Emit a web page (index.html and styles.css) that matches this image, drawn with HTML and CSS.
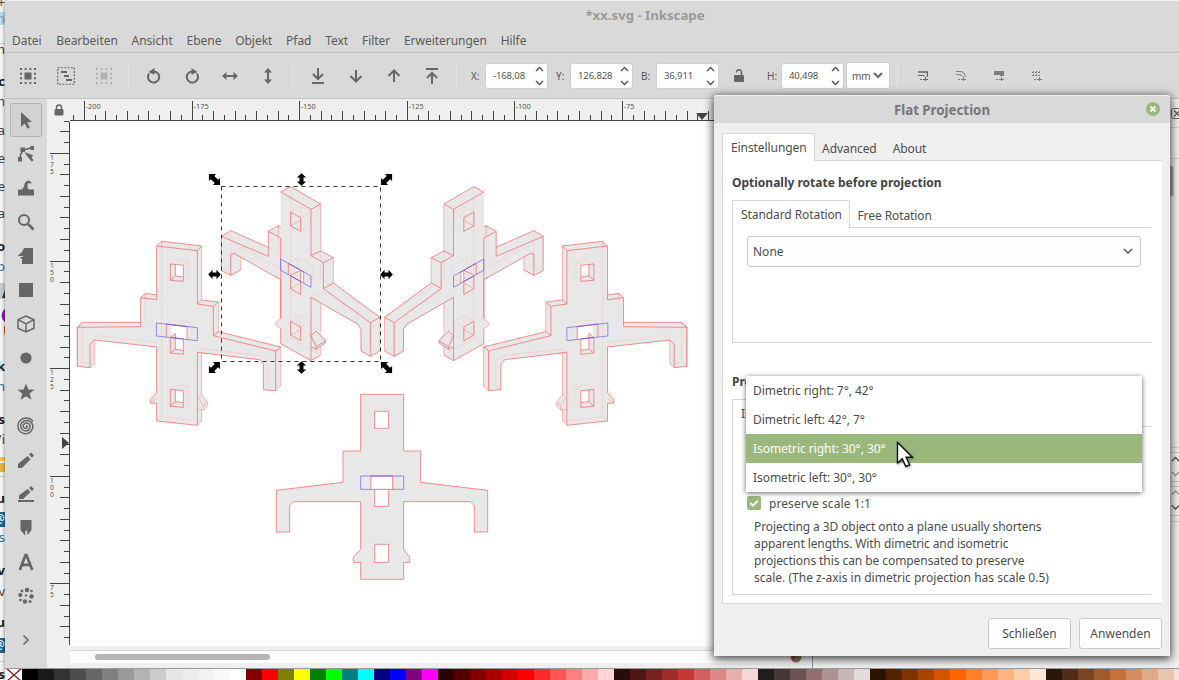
FILE: index.html
```html
<!DOCTYPE html>
<html lang="de">
<head>
<meta charset="utf-8">
<title>*xx.svg - Inkscape</title>
<link rel="stylesheet" href="styles.css">
</head>
<body>
<div class="desktop">
  <svg class="behind" width="5" height="680" viewBox="0 0 5 680">
    <rect width="5" height="680" fill="#f7f7f7"/>
    <rect y="12" width="5" height="13" fill="#b9dcf5"/>
    <rect y="283" width="5" height="16" fill="#c9ced4"/>
    <path d="M5 309a8 8 0 0 0 0 13z" fill="#8a1fa0"/><path d="M5 325v10l-1-2v-6z" fill="#b5541c"/>
    <path d="M5 290v8H2z" fill="#333"/>
    <rect y="457" width="5" height="4" fill="#f3c54b"/><rect y="463" width="5" height="9" fill="#e9b93c"/>
    <path d="M0 476.500h5M0 43.500h5M0 661.500h5" stroke="#d0d0d0"/>
    <rect y="512" width="5" height="15" fill="#1c6797"/><rect y="638" width="5" height="15" fill="#1c6797"/>
    <g class="behind-text" text-anchor="end">
      <text x="5" y="7">+</text><text x="5" y="23" class="dim">n</text><text x="5" y="54">n</text>
      <text x="5" y="86" class="b">c</text><text x="5" y="106">n</text><text x="5" y="135">a</text>
      <text x="5" y="163">e</text><text x="5" y="191">e</text><text x="5" y="218">a</text>
      <text x="5" y="251" class="b">o</text><text x="5" y="271" class="link">p</text>
      <text x="5" y="371" class="b">k</text><text x="5" y="391" class="link">n</text>
      <text x="5" y="424" class="b">s</text><text x="5" y="444">/i</text>
      <text x="5" y="503" class="b">u</text><text x="5" y="523" class="inv">@</text><text x="5" y="542" class="link">s</text>
      <text x="5" y="575" class="b">v</text><text x="5" y="596">v</text><text x="5" y="627" class="b">u</text>
      <text x="5" y="649" class="inv">@</text><text x="5" y="679" class="b">s</text>
    </g>
  </svg>

  <div class="window">
    <div class="titlebar">*xx.svg - Inkscape</div>
    <div class="menubar">
      <span>Datei</span><span>Bearbeiten</span><span>Ansicht</span><span>Ebene</span><span>Objekt</span><span>Pfad</span><span>Text</span><span>Filter</span><span>Erweiterungen</span><span>Hilfe</span>
    </div>
    <div class="toolbar">
      <div class="tb"><svg width="16" height="16" viewBox="0 0 16 16"><rect x="4.500" y="4.500" width="7" height="7"/><path d="M0 1h16M0 15h16" class="dots"/><path d="M1 0v16M15 0v16" class="dots"/></svg></div>
      <div class="tb"><svg width="18" height="18" viewBox="0 0 18 18"><rect x=".750" y=".750" width="16.500" height="16.500" class="l dash"/><path d="M4 5h6M7 9h5M9 13h6" class="l"/></svg></div>
      <div class="tb off"><svg width="16" height="16" viewBox="0 0 16 16"><rect x="4.500" y="4.500" width="7" height="7"/><path d="M0 1h16M0 15h16" class="dots"/><path d="M1 0v16M15 0v16" class="dots"/></svg></div>
      <i class="sep"></i>
      <div class="tb"><svg width="16" height="16" viewBox="0 0 16 16"><path d="M3.200 5.500A5.600 5.600 0 1 0 8 3.400" class="l"/><path d="M8.500 0v6.800L2.500 4z"/></svg></div>
      <div class="tb"><svg width="16" height="16" viewBox="0 0 16 16"><path d="M12.800 5.500A5.600 5.600 0 1 1 8 3.400" class="l"/><path d="M7.500 0v6.800l6-2.800z"/></svg></div>
      <div class="tb"><svg width="16" height="16" viewBox="0 0 16 16"><path d="M3 8h10" class="l"/><path d="M4.500 4v8L0 8zM11.500 4v8L16 8z"/></svg></div>
      <div class="tb"><svg width="16" height="16" viewBox="0 0 16 16"><path d="M8 3v10" class="l"/><path d="M4 4.500h8L8 0zM4 11.500h8L8 16z"/></svg></div>
      <i class="sep"></i>
      <div class="tb"><svg width="16" height="18" viewBox="0 0 16 18"><path d="M8 1v11M3 7l5 5 5-5M2 16h12" class="l"/></svg></div>
      <div class="tb"><svg width="16" height="16" viewBox="0 0 16 16"><path d="M8 2v11M2.500 8L8 13.500 13.500 8" class="l"/></svg></div>
      <div class="tb"><svg width="16" height="16" viewBox="0 0 16 16"><path d="M8 14V3M2.500 8L8 2.500 13.500 8" class="l"/></svg></div>
      <div class="tb"><svg width="16" height="18" viewBox="0 0 16 18"><path d="M8 17V6M3 11l5-5 5 5M2 2h12" class="l"/></svg></div>
      <i class="sep"></i>
      <label>X:</label><div class="spin"><span>-168,08</span><svg width="9" height="20" viewBox="0 0 9 20"><path d="M1 5l3.500-3.500L8 5M1 15l3.500 3.500L8 15" class="c"/></svg></div>
      <label>Y:</label><div class="spin"><span>126,828</span><svg width="9" height="20" viewBox="0 0 9 20"><path d="M1 5l3.500-3.500L8 5M1 15l3.500 3.500L8 15" class="c"/></svg></div>
      <label class="lb">B:</label><div class="spin"><span>36,911</span><svg width="9" height="20" viewBox="0 0 9 20"><path d="M1 5l3.500-3.500L8 5M1 15l3.500 3.500L8 15" class="c"/></svg></div>
      <div class="tb lock"><svg width="10" height="13" viewBox="0 0 10 13"><rect y="6" width="10" height="7" rx="1"/><path d="M2.500 3.500V3a2.500 2.300 0 0 1 5 0v4" class="l thin"/></svg></div>
      <label>H:</label><div class="spin"><span>40,498</span><svg width="9" height="20" viewBox="0 0 9 20"><path d="M1 5l3.500-3.500L8 5M1 15l3.500 3.500L8 15" class="c"/></svg></div>
      <div class="unit">mm<svg width="10" height="7" viewBox="0 0 10 7"><path d="M1 1l4 4 4-4" class="l"/></svg></div>
      <i class="sep s2"></i>
      <div class="tb"><svg width="10" height="10" viewBox="0 0 10 10"><path d="M0 1h9.500V6" class="l t15"/><path d="M0 4.500h6v1" class="l t1"/><path d="M2 8.500h2M5 8.500h5M7.500 6v4" class="l t1"/></svg></div>
      <div class="tb off2"><svg width="10" height="10" viewBox="0 0 10 10"><path d="M0 .500h4q5 0 5 5.500M0 3.500h2q4 0 4 2" class="l t1"/><path d="M2 8.500h2M5 8.500h5M7.500 6v4" class="l t1"/></svg></div>
      <div class="tb off2"><svg width="10" height="10" viewBox="0 0 10 10"><path d="M0 0h10V5H6V4H0z"/><path d="M2 8.500h2M5 8.500h5M7.500 6v4" class="l t1"/></svg></div>
      <div class="tb off2"><svg width="10" height="10" viewBox="0 0 10 10"><path d="M0 1.500h9M0 4.500h9" class="l t1 d2"/><path d="M1.500 0v6M4.500 0v6M7.500 0v3" class="l t1 d2"/><path d="M2 8.500h2M5 8.500h5M7.500 6v4" class="l t1"/></svg></div>
    </div>

    <div class="work">
      <div class="toolbox">
        <div class="tool on"><svg width="18" height="18" viewBox="0 0 18 18"><path d="M4 1l11 10-5 .300 3 5-2.500 1.500L7.700 12.500 4 16z"/></svg></div>
        <div class="tool"><svg width="18" height="18" viewBox="0 0 18 18"><path d="M3 14Q3 3 16 3" class="l thin"/><path d="M1 12h4v4.500H1zM3.500 2.500H8V7H3.500zM13.500 1H17v4h-3.500zM7.500 7l9 3.500-2 1.500 2 3.500-2 1-4-5z"/></svg></div>
        <div class="tool"><svg width="18" height="18" viewBox="0 0 18 18"><path d="M1 16.500V10.500q5 1 6-3.500 1-5.500 5-5.500l2.500 2-1 1.500q-2-2-3 .500-.500 3.500 1.500 5H17v6z"/></svg></div>
        <div class="tool"><svg width="18" height="18" viewBox="0 0 18 18"><circle cx="7" cy="7" r="5" class="l"/><path d="M11 11l5.500 5.500" class="l w3"/></svg></div>
        <div class="tool"><svg width="18" height="18" viewBox="0 0 18 18"><path d="M7 1h9v16H5v-5l-4-3.500L5 5z"/><path d="M2 9.500h4" class="hole"/></svg></div>
        <div class="tool"><svg width="18" height="18" viewBox="0 0 18 18"><rect x="2" y="2" width="14" height="14"/></svg></div>
        <div class="tool"><svg width="18" height="18" viewBox="0 0 18 18"><path d="M9 1l8 3.700v8.600L9 17l-8-3.700V4.700zM1 4.700L9 9l8-4.300M9 9v8" class="l thin"/></svg></div>
        <div class="tool"><svg width="18" height="18" viewBox="0 0 18 18"><circle cx="9" cy="9" r="5.600"/></svg></div>
        <div class="tool"><svg width="18" height="18" viewBox="0 0 18 18"><path d="M9 .500l2.300 5.900 6.200.300-4.800 3.900 1.700 6.200L9 13.300l-5.400 3.500 1.700-6.200L.500 6.700l6.200-.300z"/></svg></div>
        <div class="tool"><svg width="18" height="18" viewBox="0 0 18 18"><path d="M9 9.500C10 8 11 10 9.500 11.200 7.500 12.200 5.800 10 6.300 8.300 7 5.500 11 5.200 12.500 7.500 14 10.500 12 14 9 14 5.500 14 3.300 11 3.700 8 4.500 4.500 8 3 11 3.500 15 4.500 16.500 8 15.500 11.500 14 15.500 10.500 17.200 7 16.500 2.500 15.300.700 12 1 8 1.500 4 5 1 9 1 12 1 14.500 2 16 4.500" class="l thin"/></svg></div>
        <div class="tool"><svg width="18" height="18" viewBox="0 0 18 18"><path d="M1 17v-4L10.500 5l3 3.200L5 17zM12 3.500l2-2 3 3-2 2.200z"/></svg></div>
        <div class="tool"><svg width="18" height="18" viewBox="0 0 18 18"><path d="M2 14v-3.500L10.500 4l3 3L6 14zM12 3l2-2 3 3-2 2zM1 15h16v2H1z"/></svg></div>
        <div class="tool"><svg width="18" height="18" viewBox="0 0 18 18"><path d="M3.500 1h11v10l-4 5-.500-4.500h-1.500L8 16.500 3.500 11z"/></svg></div>
        <div class="tool"><svg width="18" height="18" viewBox="0 0 18 18"><path d="M2.800 17L8.500 2h1l5.700 15M5 11.800h8" class="l w3"/></svg></div>
        <div class="tool"><svg width="18" height="18" viewBox="0 0 18 18"><circle cx="10" cy="3" r="2.200"/><circle cx="14.500" cy="4" r="1.300"/><circle cx="5" cy="4" r="1.400"/><circle cx="3.300" cy="8" r="2.100"/><circle cx="9" cy="8.500" r="1.200"/><circle cx="14.500" cy="9.500" r="2.200"/><circle cx="3.500" cy="13" r="1.300"/><circle cx="8" cy="14.500" r="2.200"/><circle cx="13" cy="14.500" r="1.500"/></svg></div>
        <div class="tool last"><svg width="8" height="12" viewBox="0 0 8 12"><path d="M1.500 1.500L6 6l-4.500 4.500" class="l w17"/></svg></div>
      </div>

      <div class="view">
        <div class="ruler-row">
          <svg class="corner" width="23" height="22" viewBox="0 0 23 22"><rect x="7.500" y="10" width="9" height="6.500" rx="1"/><path d="M9.500 11V8.500a2.500 2.500 0 0 1 5 0V11" class="l thin"/></svg>
          <svg id="hruler" width="742" height="22" viewBox="70 99 742 22"></svg>
        </div>
        <div class="canvas-row">
          <svg id="vruler" width="23" height="525" viewBox="47 121 23 525"></svg>
          <svg class="canvas" width="742" height="525" viewBox="70 121 742 525">
            <defs>
              <g id="dimetric" stroke-linejoin="round">
                <path class="body" d="M260 243L275 229 395 243V405L445 411V500L632 546V664L617 677 580 674V597L568 584 395 564V688L413 712V722L400 736 395 734V768L382 781 260 768V715H241V704L260 683V546L73 525V597L60 608 22 604V487L37 472H212V398L226 385 260 390z"/>
                <path class="faint" d="M275 229V404L260 402M226 385V472M275 404V755L395 768M275 755L260 768M37 472V592L73 597M37 592L22 604M90 512L260 532M60 538L78 513H92M395 552L560 570M382 562L395 552 580 572 595 586V662L632 664M595 662L580 674M568 584L585 573M301 297L316 283 355 289V338L340 349M340 301L355 289M289 477L304 465 366 472V510L351 523M301 673L316 660 355 665V715L340 727M340 677L355 665M260 672L250 684V692"/>
                <path class="edge2" d="M275 229V245M395 243V405M226 385V398M445 411V500M632 546V664L617 677M22 604L22 487 37 472M60 608L73 597V528M382 781L395 768V734M395 562V688M395 564L413 566M241 714L260 700M385 698L400 722V736L413 722V712L395 688 385 698M400 722L413 712M382 734H400"/>
                <path class="edge" d="M260 243L382 257V417L430 424V512L617 558V677L580 674V597L568 584 382 562V781L260 768V715L241 714V704L260 683V546L73 525 60 538V608L22 604V487L212 485V398L260 404zM260 243L275 229 395 243 382 257M212 398L226 385 260 390M382 417L395 405 445 411 430 424M430 512L445 500 632 546 617 558M22 487L37 472H212"/>
                <path fill="#fff" d="M316 298L340 301V336L316 333zM304 482L351 487V524L340 522V556L316 553V505L304 515zM316 674L340 677V713L316 710z"/>
                <path class="edge" d="M301 297L340 301V349L301 346zM316 298V333L340 336M301 346L316 333M301 517V564L340 568V522M301 517L316 505V553L340 556M301 564L316 553M289 478V517M351 485V524M301 673L340 677V727L301 724zM316 675V710L340 713M301 724L316 710"/>
                <path class="blue" d="M259 474L382 488V527L259 513z"/>
                <path class="purple" d="M289 477L351 485M304 517L340 522"/>
              </g>
              <g id="isometric" stroke-linejoin="round">
                <path class="body" d="M632 81L662 65 752 117V258L790 278V354L930 457V558L901 574 873 558V492L862 477 752 415V500L767 528V533L752 545V570L723 587 632 536V490L617 480V473L632 460V344L512 275V315L482 331 454 317V214L482 197 595 247V199L625 182 632 186z"/>
                <path class="faint" d="M662 65V520L632 536M662 520L752 570M625 182V265M482 197V300L454 317M482 300L512 315M482 264L520 245 660 328M482 232L600 300M752 258V342L930 457M752 380L862 440 862 477M723 397L752 380M901 473V540L873 558M901 540L930 558M752 258L723 272M662 141L691 124 721 141V182L692 199M692 158L721 141M691 124V165M655 295L684 278 730 304V338L701 353M684 278V320M662 469L691 452 721 469V510L692 527M692 486L721 469M691 452V486M617 473L640 458"/>
                <path class="edge2" d="M752 117V258M790 278V354M752 415V500M752 545V570M930 457V558M512 275V315M625 182V212M617 473L632 460M632 490L617 480V473M662 183L692 166M662 510L692 494M662 371L692 354"/>
                <path class="edge" d="M723 512L738 498 767 528V533L738 553 723 545M723 512L738 545V553M738 545L767 528"/>
                <path class="edge" d="M632 81L723 133V272L760 293V371L901 473V574L873 558V492L862 477 723 397V587L632 536V490M632 460V344L492 265 482 268V331L454 317V214L595 274V199L632 219zM632 81L662 65 752 117 723 133M454 214L482 197 595 247M595 199L625 182 632 186M723 272L752 258 790 278 760 293M760 371L790 354 930 457 901 473M901 574L930 558M482 331L512 315M723 587L752 570"/>
                <path fill="#fff" d="M677 318L688 308 701 321V353L692 348V322z"/>
                <path class="edge" d="M662 141L692 158V199L662 183zM662 469L692 486V527L662 510zM655 295V329M701 321V353M692 348V389L662 371V333M662 330L692 316V350"/>
                <path class="blue" d="M632 282L723 333V367L632 316z"/>
                <path class="purple" d="M655 295L701 321M662 333L692 349"/>
              </g>
              <path id="ns" d="M0-6.300L4.700-2H2V2h2.700L0 6.300-4.700 2H-2v-4h-2.700z"/>
              <path id="diag" d="M-5.600-5.600H1.500L-.200-3.600 3.600.200 5.600-1.500V5.600H-1.500L.200 3.600-3.600-.200-5.600 1.500z"/>
            </defs>
            <rect x="70" y="121" width="742" height="525" fill="#fff"/>
            <g transform="translate(70 165) scale(.33333)"><use href="#dimetric"/><use href="#isometric"/></g>
            <g transform="translate(694.200 165) scale(-.33333 .33333)"><use href="#dimetric"/></g>
            <g transform="translate(694.500 165) scale(-.33333 .33333)"><use href="#isometric"/></g>
            <g transform="translate(260 380) scale(.33333)">
              <path class="body" fill-rule="evenodd" d="M302 43H431V213H482V307L683 331V456H643V377L631 365H431V508L449 532V547H431V598H302V547H280V532L302 508V365H101L89 377V456H49V331L249 307V213H302zM344 94V145H386V94zM333 288V328H344V379H386V328H398V288zM344 493V547H386V493z"/>
              <path class="edge" d="M302 43H431V213H482V307L683 331V456H643V377L631 365H431V508L449 532V547H431V598H302V547H280V532L302 508V365H101L89 377V456H49V331L249 307V213H302zM344 94V145H386V94zM333 288V328M344 328V379H386V328M398 328V288M344 493V547H386V493z"/>
              <path class="blue" d="M302 288H431V328H302z"/><path class="purple" d="M333 288H398"/>
            </g>
            <rect x="221.500" y="186.500" width="159" height="175" class="selection"/>
            <use href="#diag" x="214.500" y="179.500"/><use href="#ns" x="301.500" y="179.500"/>
            <use href="#diag" transform="translate(386.500 179.500) rotate(90)"/>
            <use href="#ns" transform="translate(386.500 274.500) rotate(90)"/><use href="#ns" transform="translate(214.500 274.500) rotate(90)"/>
            <use href="#diag" transform="translate(214.500 367.500) rotate(90)"/><use href="#ns" x="301.500" y="367.500"/><use href="#diag" x="386.500" y="367.500"/>
          </svg>
        </div>
        <div class="hscroll"><i class="thumb"></i><svg class="cms" width="12" height="12" viewBox="0 0 12 12"><circle cx="6" cy="6" r="5.500" fill="#8b7b52"/><path d="M2 2l4 4-4 4z" fill="#a33a3a"/></svg></div>
      </div>
      <svg class="dock" viewBox="813 99 366 569" width="366" height="569">
        <rect x="813" y="99" width="366" height="569" fill="#f1f1f1"/>
        <rect x="1171.500" y="108.500" width="12" height="10" rx="2" class="l t1"/><path d="M1174 110.500l6 6M1180 110.500l-6 6" class="l thin"/>
        <path d="M1160 127.500h19M1160 158.500h19M1160 447.500h19M1160 521.500h19" stroke="#d2d2d2"/>
        <rect x="1160" y="166" width="13.500" height="30" rx="2" fill="#a6a6a6"/>
        <path d="M1160 452.500h19M1160 481.500h19M1160 486.500h19M1160 515.500h19" stroke="#c6c6c6"/>
        <path d="M1172 461l3.500-3.500 3.500 3.500M1172 505.500l3.500 3.500 3.500-3.500" class="c"/><path d="M1172 472l3.500 3.500 3.500-3.500M1172 494.500l3.500-3.500 3.500 3.500" class="c" opacity=".500"/>
      </svg>
    </div>
    <div class="palette" id="palette"><svg width="16" height="11" viewBox="0 0 16 11"><rect width="16" height="11" fill="#fff"/><path d="M0-1l16 14M16-1L0 13" stroke="#7a1a1a" stroke-width="1.300"/></svg></div>
  </div>

  <div class="dialog">
    <div class="dialog-title">Flat Projection<svg class="close" width="14" height="14" viewBox="0 0 14 14"><circle cx="7" cy="7" r="7" fill="#9bb87c"/><path d="M4.500 4.500l5 5M9.500 4.500l-5 5" stroke="#fff" stroke-width="1.800"/></svg></div>
    <div class="dialog-body">
      <div class="tabs main-tabs"><span class="tab active">Einstellungen</span><span class="tab">Advanced</span><span class="tab">About</span></div>
      <div class="page main-page">
        <h2>Optionally rotate before projection</h2>
        <div class="tabs"><span class="tab active">Standard Rotation</span><span class="tab">Free Rotation</span></div>
        <div class="page rotation-page">
          <div class="combo"><span>None</span><svg width="10" height="7" viewBox="0 0 10 7"><path d="M1 1l4 4 4-4" class="l w17"/></svg></div>
        </div>
        <h2 class="second">Projection</h2>
        <div class="tabs"><span class="tab active">Isometric</span></div>
        <div class="page projection-page">
          <div class="check"><svg width="14" height="14" viewBox="0 0 14 14"><rect width="14" height="14" rx="2" fill="#9bb87c"/><path d="M3.300 7l2.600 2.600 5-5" fill="none" stroke="#fff" stroke-width="2"/></svg><span>preserve scale 1:1</span></div>
          <p><span class="snug">Projecting a 3D object onto a plane usually shortens</span><br><span class="snug">apparent lengths. With dimetric and isometric</span><br><span class="close-set">projections this can be compensated to preserve</span><br>scale. (The z-axis in dimetric projection has scale 0.5)</p>
        </div>
      </div>
      <div class="actions"><button>Schließen</button><button>Anwenden</button></div>
    </div>
    <div class="popup">
      <div>Dimetric right: 7°, 42°</div><div>Dimetric left: 42°, 7°</div><div class="hot">Isometric right: 30°, 30°</div><div>Isometric left: 30°, 30°</div>
    </div>
  </div>
  <svg class="cursor" width="20" height="30" viewBox="0 0 20 30"><path d="M1.500 1.500V22l4.800-4.300 3.500 7.800 3.800-1.700-3.500-7.600h6.300z" fill="#fff" stroke="#111" stroke-width="1.400"/></svg>
</div>
<script src="script.js"></script>
</body>
</html>
```

FILE: styles.css
```css
* { box-sizing: border-box; }
body { margin: 0; font: 12px "Noto Sans", sans-serif; color: #4d4d4d; overflow: hidden; }
svg { display: block; flex: none; fill: #666; }

.desktop { position: relative; display: flex; width: 1179px; height: 680px; overflow: hidden; background: #f7f7f7; }
.behind-text { font-size: 13px; fill: #444; }
.behind-text .b { font-weight: 700; fill: #222; }
.behind-text .link { fill: #2a76b8; }
.behind-text .dim { fill: #8d9cb5; }
.behind-text .inv { fill: #fff; }

.window { display: flex; flex-direction: column; width: 1174px; height: 680px; background: #d9d9d9; border-top: 1px solid #efefef; border-radius: 4px 0 0 0; box-shadow: 0 0 4px rgba(0,0,0,.5); }
.titlebar { height: 29px; padding-left: 106px; text-align: center; line-height: 28px; font-size: 13.2px; font-weight: 700; color: #9a9a9a; }
.menubar { display: flex; gap: 13.8px; height: 23px; padding-left: 7px; line-height: 21px; letter-spacing: -.04px; color: #5a5a5a; border-bottom: 1px solid #bfbfbf; }
.menubar span:first-child { margin-right: .9px; }
.toolbar { display: flex; align-items: center; height: 46px; padding-left: 4px; border-bottom: 1px solid #c2c2c2; color: #555; font-size: 10px; }
.tb { width: 38px; display: flex; justify-content: center; }
.off { opacity: .35; }
.off2 { opacity: .8; }
.sep { width: 1px; height: 24px; margin: 0 6px 0 5px; background: #e4e4e4; }
.l { fill: none; stroke: #666; stroke-width: 2; }
.thin { stroke-width: 1.5; }
.t1 { stroke-width: 1; }
.t15 { stroke-width: 1.5; }
.w17 { stroke-width: 1.7; }
.w3 { stroke-width: 2.7; }
.c { fill: none; stroke: #555; stroke-width: 1.4; }
.dash { stroke-width: 1.2; stroke-dasharray: 2 1.3; }
.dots { fill: none; stroke: #666; stroke-width: 2; stroke-dasharray: 2 2.67; }
.d2 { stroke-dasharray: 2 1; }
.hole { stroke: #d9d9d9; }
.toolbar label { width: 22px; padding-left: 8px; white-space: nowrap; }
.toolbar .lb { width: 23px; }
.spin { display: flex; align-items: center; justify-content: space-between; width: 63px; height: 26px; padding: 0 3px 0 7px; background: #fdfffe; border: 1px solid #cfcfcf; border-radius: 3px; }
.spin span { width: 35px; overflow: hidden; white-space: nowrap; font-size: 9.6px; letter-spacing: -.15px; }
.lock { width: 40px; }
.unit { display: flex; align-items: center; justify-content: space-between; width: 44px; height: 27px; margin-left: 2px; padding: 0 6px 0 5px; background: #fdfffe; border: 1px solid #cfcfcf; border-radius: 3px; }
.s2 { margin: 0 6px 0 7px; }

.work { display: flex; flex: none; height: 570px; background: #efefef; border-bottom: 1px solid #999; }
.toolbox { display: flex; flex-direction: column; width: 42px; padding: 4px 5px 0; background: #d9d9d9; }
.tool { display: flex; flex: none; align-items: center; justify-content: center; height: 34px; }
.tool.on { background: #d2d2d2; border: 1px solid #b4b4b4; border-radius: 2px; }
.tool.last { height: 54px; }
.view { width: 766px; border-right: 1px solid #999; }
.ruler-row, .canvas-row { display: flex; }
.hscroll { display: flex; align-items: center; justify-content: space-between; height: 13px; margin: 4px 0 0 23px; padding: 0 10px 0 25px; background: #fcfcfc; border-top: 1px solid #d6d6d6; }
.thumb { width: 175px; height: 6px; border-radius: 3px; background: #b5b5b5; }
.rl { font-size: 7.4px; fill: #5c574e; }
.rv { font-size: 6.8px; fill: #5c574e; }
.tick { fill: none; stroke: #444; shape-rendering: crispEdges; }
.body { fill: #e8e8e8; }
.edge, .edge2, .faint, .blue, .purple { fill: none; stroke: #f77070; stroke-width: 2.4; }
.edge2 { stroke: #f9a5a5; }
.faint { stroke: #efcfcf; stroke-width: 1.8; }
.blue { stroke: #7272f2; }
.purple { stroke: #a040a8; }
.selection { fill: none; stroke: #333; stroke-dasharray: 4 4; }
.canvas use { fill: #000; }
.palette { display: flex; height: 11px; padding-left: 1px; background: #efefef; }
.palette i { flex: none; width: 16px; height: 11px; }

.dialog { position: absolute; left: 714px; top: 95px; width: 456px; height: 561px; background: #efefef; border-radius: 3px 3px 0 0; box-shadow: 0 2px 10px 1px rgba(0,0,0,.75); }
.dialog-title { position: relative; height: 28px; line-height: 28px; text-align: center; font-size: 13.3px; font-weight: 700; color: #777; background: #d9d9d9; border-top: 1px solid #f2f2f2; border-radius: 3px 3px 0 0; }
.close { position: absolute; right: 10px; top: 6px; }
.dialog-body { padding: 10px 8px 0; }
.tabs { display: flex; height: 28px; margin-bottom: -1px; letter-spacing: -.08px; }
.tab { padding: 2px 8px 0; line-height: 26px; white-space: nowrap; border: 1px solid transparent; border-bottom: 0; }
.tab.active { position: relative; padding: 1px 7.500px 0 8px; background: #fff; border-color: #d8d8d8; }
.tab:not(.active) { padding-left: 6px; }
.page { background: #fff; border: 1px solid #d8d8d8; border-right-color: transparent; }
.main-page { height: 444px; padding: 9px; padding-top: 13px; }
h2 { margin: 0 0 8px; font-size: 12px; line-height: 18px; font-weight: 700; color: #444; }
.rotation-page { height: 116px; padding: 8px 10px 0 14px; }
.combo { display: flex; align-items: center; justify-content: space-between; height: 31px; padding: 0 7px 0 5px; background: #fdfffe; border: 1px solid #c9c9c9; border-radius: 3px; }
.second { margin-top: 30px; }
.projection-page { height: 169px; padding: 69px 14px 0; }
.check { display: flex; align-items: center; gap: 8px; height: 14px; letter-spacing: .08px; }
.projection-page p { margin: 8px 0 0 7px; line-height: 17px; white-space: nowrap; }
.snug { letter-spacing: -.1px; }
.close-set { letter-spacing: -.07px; }
.actions { display: flex; justify-content: flex-end; gap: 8px; margin-top: 14px; }
button { width: 83px; height: 31px; padding: 0; font: inherit; color: inherit; background: #fdfffe; border: 1px solid #cbcbcb; border-radius: 3px; }
.popup { position: absolute; left: 32px; top: 281px; width: 396px; height: 116px; background: #fff; box-shadow: 0 1px 5px rgba(0,0,0,.6); letter-spacing: -.05px; }
.popup div { height: 29px; padding-left: 7px; line-height: 29px; }
.popup .hot { background: #9bb87c; color: #fff; }
.cursor { position: absolute; left: 896px; top: 441px; filter: drop-shadow(1px 1px 1px rgba(0,0,0,.35)); }
```

FILE: script.js
```js
const STEP = 10.763;

// Horizontal ruler: a labelled major tick every ten steps, even steps longer than odd ones.
let d = 'M70 120.500H812';
let labels = '';
for (let i = -1; i < 68; i++) {
  const x = Math.floor(84.4 + i * STEP) + 0.5;
  const top = i % 10 === 0 ? 101 : (i % 2 === 0 ? 111 : 115);
  d += `M${x} ${top}V120`;
  if (i % 10 === 0) labels += `<text class="rl" x="${x + 1.2}" y="109">${-200 + i * 2.5}</text>`;
}
document.getElementById('hruler').innerHTML =
  `<path class="tick" d="${d}"/>${labels}<path d="M696 113h12l-6 7z" fill="#444"/>`;

// Vertical ruler with stacked digits.
d = 'M69.500 122V645M64 121.500H69';
labels = '';
for (let i = -2; i < 46; i++) {
  const y = Math.floor(153.4 + i * STEP) + 0.5;
  const left = i % 10 === 0 ? 50 : (i % 2 === 0 ? 60 : 64);
  d += `M${left} ${y}H69`;
  if (i % 10 === 0) {
    String(175 - i * 2.5).split('').forEach((c, k) => {
      labels += `<text class="rv" x="50" y="${y + 6.5 + k * 7}">${c}</text>`;
    });
  }
}
document.getElementById('vruler').innerHTML =
  `<path class="tick" d="${d}"/>${labels}<path d="M62 437v12l7-6z" fill="#444"/>`;

const colors = ('000 1a1a1a 333 4d4d4d 666 808080 999 b3b3b3 ccc e6e6e6 ececec f2f2f2 f9f9f9 fff ' +
  '800000 f00 808000 ff0 008000 0f0 008080 0ff 000080 00f 800080 f0f ' +
  '2b0000 500 800000 a00 d40000 f00 ff2a2a f55 ff8080 faa ffd5d5 ' +
  '280b0b 501616 782121 a02c2c c83737 d35f5f de8787 e9afaf f4d7d7 ' +
  '241c1c 483737 6c5353 916f6f ac9393 c8b7b7 e3dbdb ' +
  '2b1100 520 803300 a40 d45500 f60 ff7f2a f95 ffb380 fca ffe6d5 ' +
  '28170b 502d16 784421 a05a2c c87137 d38d5f deaa87 e9c6af f4e3d7').split(' ');
const palette = document.getElementById('palette');
for (const c of colors) {
  const swatch = document.createElement('i');
  swatch.style.background = '#' + c;
  palette.append(swatch);
}
```
